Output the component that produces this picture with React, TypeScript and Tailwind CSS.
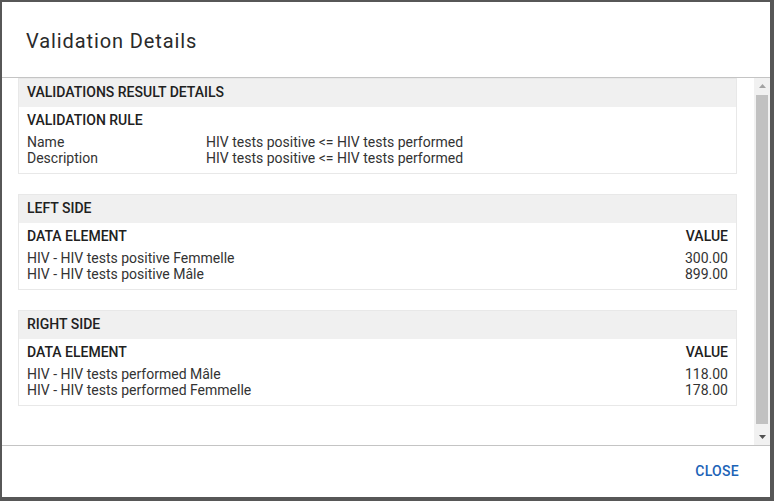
import React from "react";

type Row = { label: string; value: string };

function Section({
  title,
  heading,
  rows,
}: {
  title: string;
  heading: React.ReactNode;
  rows: React.ReactNode;
}) {
  return (
    <div className="border border-[#e8e8e8]">
      <div className="h-[28px] bg-[#f0f0f0] px-[8px] pb-[1px] flex items-center text-[14px] font-medium text-[#212121]">
        {title}
      </div>
      <div className="px-[8px] pt-[3px] pb-[7px]">
        <div className="h-[20px] flex items-center text-[14px] font-medium text-[#212121]">{heading}</div>
        <div className="mt-[4px] text-[14px] leading-[16px] text-[#333333]">{rows}</div>
      </div>
    </div>
  );
}

function ValueSection({ title, rows }: { title: string; rows: Row[] }) {
  return (
    <Section
      title={title}
      heading={
        <div className="flex w-full justify-between">
          <span>DATA ELEMENT</span>
          <span>VALUE</span>
        </div>
      }
      rows={rows.map((r) => (
        <div key={r.label} className="flex justify-between">
          <span>{r.label}</span>
          <span>{r.value}</span>
        </div>
      ))}
    />
  );
}

export default function App() {
  return (
    <div
      className="w-[774px] h-[501px] bg-[#575757] p-[2px] overflow-hidden"
      style={{ fontFamily: "Roboto, 'Liberation Sans', sans-serif" }}
    >
      <div className="w-[768px] h-[495px] bg-white flex flex-col">
        <div className="h-[76px] shrink-0 pl-[24px] pt-[2px] flex items-center text-[20px] tracking-[0.9px] text-[#2a2a2a] border-b border-[#c4c4c4]">
          Validation Details
        </div>
        <div className="h-[368px] shrink-0 flex border-b border-[#c4c4c4]">
          <div className="flex-1 pl-[16px] pr-[17px] flex flex-col gap-[20px]">
            <Section
              title="VALIDATIONS RESULT DETAILS"
              heading="VALIDATION RULE"
              rows={
                <>
                  <div className="grid grid-cols-[179px_1fr]">
                    <span>Name</span>
                    <span>HIV tests positive &lt;= HIV tests performed</span>
                  </div>
                  <div className="grid grid-cols-[179px_1fr]">
                    <span>Description</span>
                    <span>HIV tests positive &lt;= HIV tests performed</span>
                  </div>
                </>
              }
            />
            <ValueSection
              title="LEFT SIDE"
              rows={[
                { label: "HIV - HIV tests positive Femmelle", value: "300.00" },
                { label: "HIV - HIV tests positive Mâle", value: "899.00" },
              ]}
            />
            <ValueSection
              title="RIGHT SIDE"
              rows={[
                { label: "HIV - HIV tests performed Mâle", value: "118.00" },
                { label: "HIV - HIV tests performed Femmelle", value: "178.00" },
              ]}
            />
          </div>
          <div className="w-[16px] shrink-0 bg-[#f1f1f1] flex flex-col">
            <div className="h-[16px] flex items-center justify-center">
              <svg width="7" height="4" viewBox="0 0 7 4">
                <polygon points="0,4 7,4 3.5,0" fill="#a3a3a3" />
              </svg>
            </div>
            <div className="h-[329px] mt-[1px] mx-[2px] bg-[#c1c1c1]" />
            <div className="flex-1" />
            <div className="h-[16px] flex items-center justify-center">
              <svg width="7" height="4" viewBox="0 0 7 4">
                <polygon points="0,0 7,0 3.5,4" fill="#505050" />
              </svg>
            </div>
          </div>
        </div>
        <div className="flex-1 flex items-center justify-end pr-[23px]">
          <button className="px-[8px] h-[36px] text-[14px] font-medium text-[#1c63b7] tracking-[0.3px]">
            CLOSE
          </button>
        </div>
      </div>
    </div>
  );
}
